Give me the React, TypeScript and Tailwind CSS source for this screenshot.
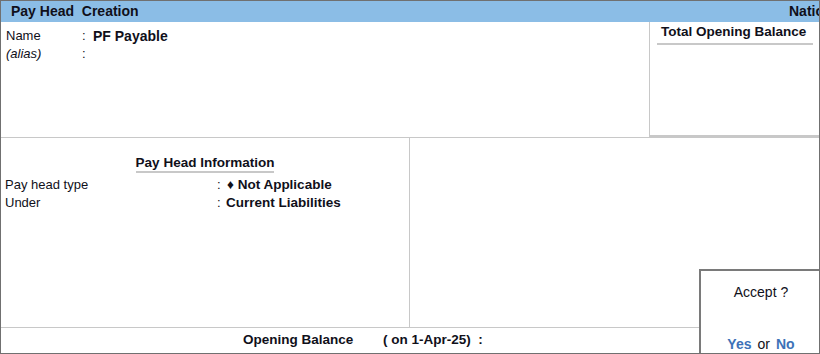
export default function App() {
  return (
    <div
      className="relative w-[820px] h-[354px] overflow-hidden bg-white border border-[#707070] flex flex-col text-[#10101a]"
      style={{ fontFamily: '"Liberation Sans", Arial, sans-serif' }}
    >
      {/* title bar */}
      <div className="h-[21px] bg-[#8bbde6] flex items-center justify-between pl-[10px] shrink-0">
        <div className="text-[14px] font-bold whitespace-pre">Pay Head  Creation</div>
        <div className="w-[30px] overflow-hidden whitespace-nowrap text-[14px] font-bold">National Traders</div>
      </div>

      {/* name block */}
      <div className="h-[116px] flex border-b border-[#c8c8c8] shrink-0">
        <div className="flex-1 pt-[5px] text-[13px]">
          <div className="flex items-center h-[18px]">
            <span className="w-[81px] pl-[5px]">Name</span>
            <span className="w-[11px]">:</span>
            <span className="text-[14px] font-bold">PF Payable</span>
          </div>
          <div className="flex items-center h-[17px]">
            <span className="w-[81px] pl-[5px] italic">(alias)</span>
            <span className="w-[11px]">:</span>
          </div>
        </div>
        <div className="w-[170px] border-l border-b-2 border-[#c8c8c8] pl-[7px] pr-[6px]">
          <div className="border-b-2 border-[#c8c8c8] pb-[1px] pl-[4px] text-[13.5px] font-bold">Total Opening Balance</div>
        </div>
      </div>

      {/* pay head information */}
      <div className="flex-1 flex border-b border-[#c8c8c8]">
        <div className="w-[409px] border-r border-[#c8c8c8] text-[13px]">
          <div className="flex justify-center pt-[17px] pb-[3px]">
            <span className="border-b-2 border-[#c8c8c8] leading-[16px] text-[13.5px] font-bold">Pay Head Information</span>
          </div>
          <div className="flex items-center h-[18px]">
            <span className="w-[216px] pl-[4px]">Pay head type</span>
            <span className="w-[10px]">:</span>
            <span className="font-bold text-[13.5px]">♦ Not Applicable</span>
          </div>
          <div className="flex items-center h-[18px]">
            <span className="w-[216px] pl-[4px]">Under</span>
            <span className="w-[9px]">:</span>
            <span className="font-bold text-[13.5px]">Current Liabilities</span>
          </div>
        </div>
        <div className="flex-1" />
      </div>

      {/* opening balance */}
      <div className="h-[25px] flex items-center text-[13.5px] font-bold shrink-0">
        <span className="pl-[242px] w-[382px]">Opening Balance</span>
        <span className="whitespace-pre">( on 1-Apr-25)  :</span>
      </div>

      {/* accept dialog */}
      <div className="absolute left-[698px] top-[268px] w-[124px] h-[90px] border-2 border-[#7a7a7a] bg-white flex flex-col items-center text-[14px]">
        <div className="pt-[11px]">Accept ?</div>
        <div className="mt-auto pb-[2px] flex gap-[6px] items-baseline">
          <span className="font-bold text-[#3d72b8]">Yes</span>
          <span>or</span>
          <span className="font-bold text-[#3d72b8]">No</span>
        </div>
      </div>
    </div>
  );
}
